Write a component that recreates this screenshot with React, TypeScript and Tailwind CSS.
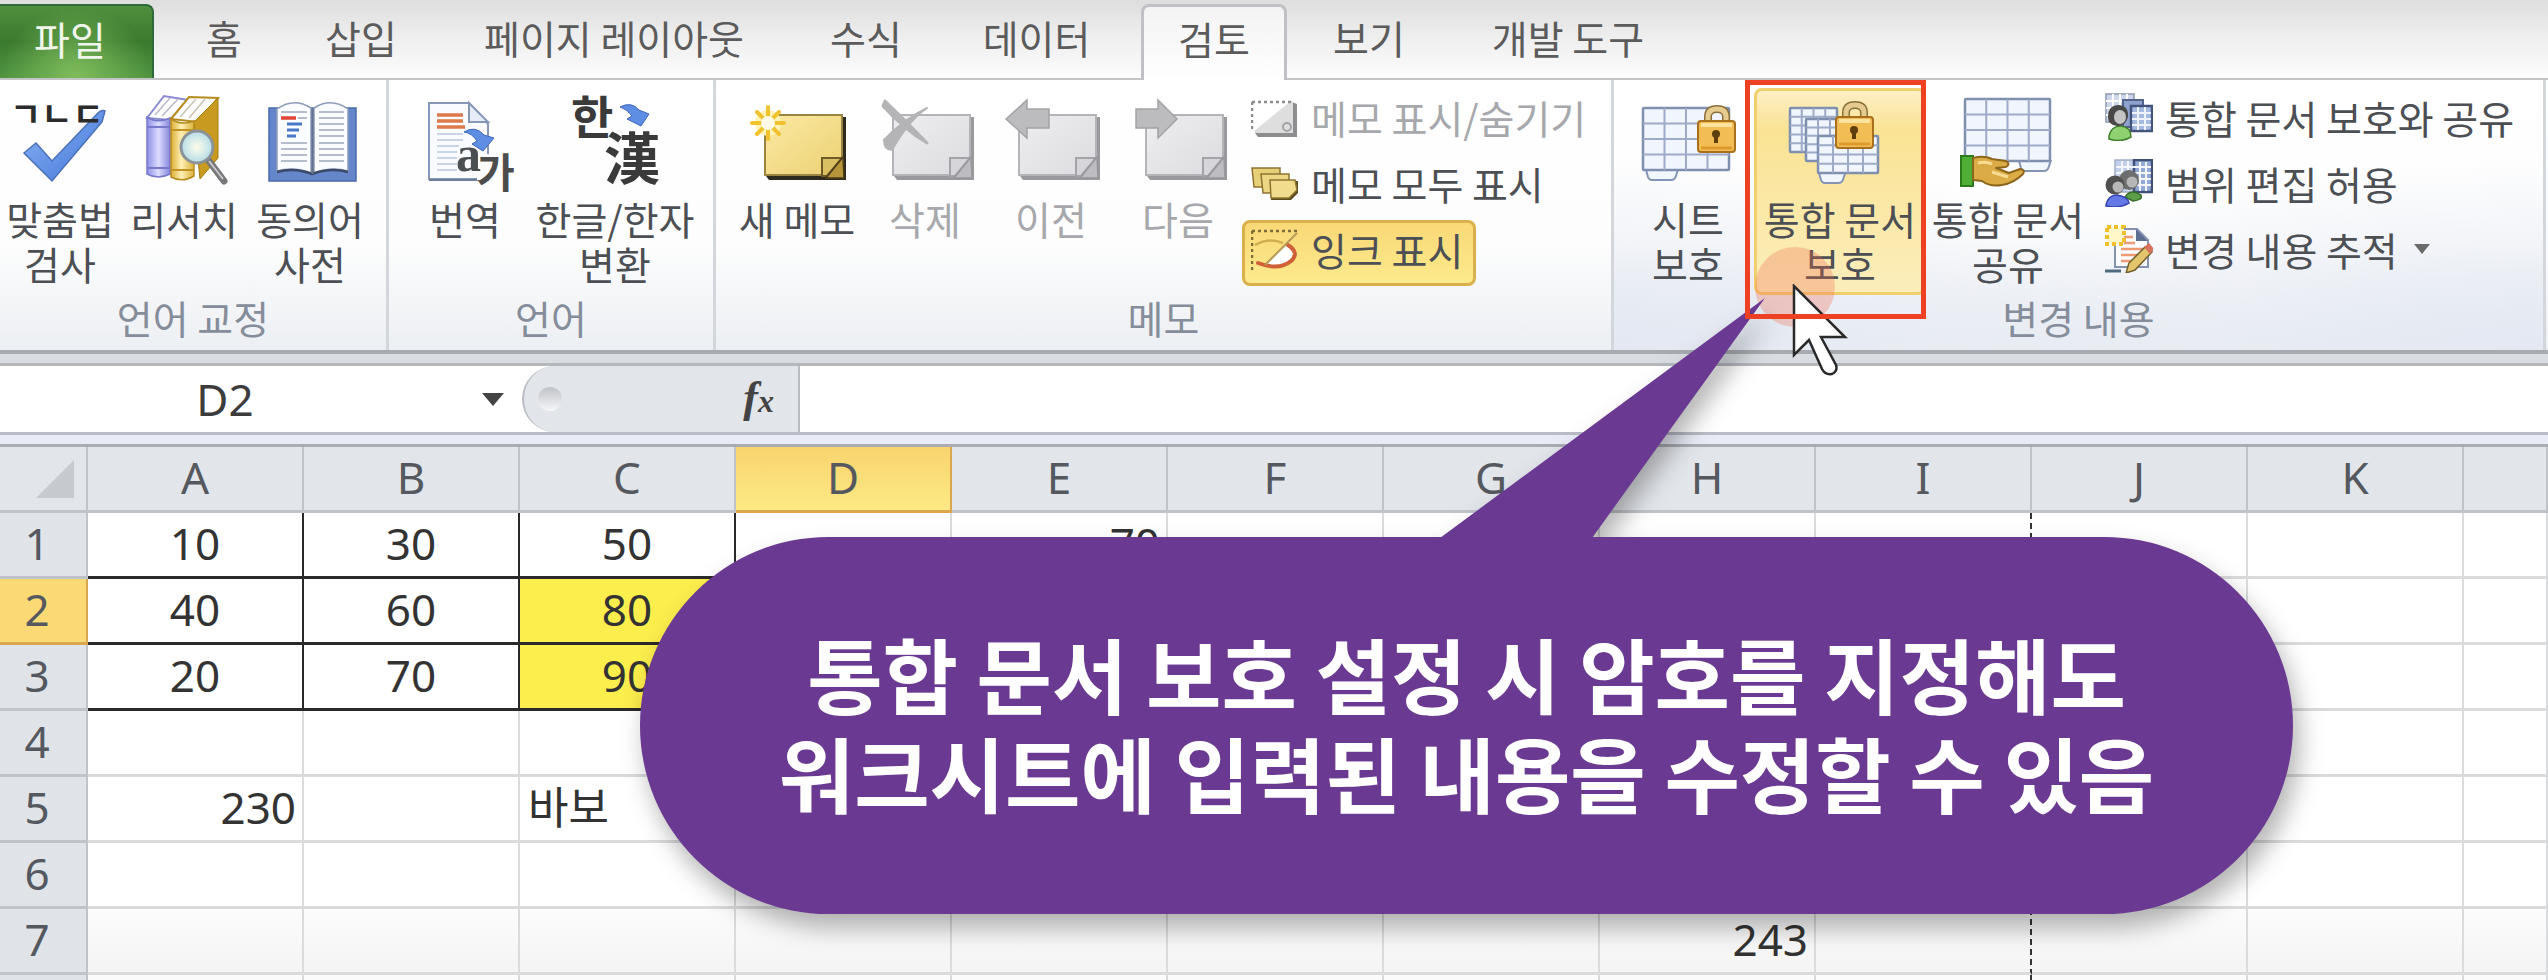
import React from "react";

const ui = "font-['Noto_Sans_CJK_KR','Noto_Sans',sans-serif]";
const latin = "font-['Noto_Sans','Noto_Sans_CJK_KR',sans-serif]";

function Svg({ children }: { children: React.ReactNode }) {
  return (
    <svg viewBox="0 0 104 108" className="h-[108px] w-[104px] shrink-0 overflow-visible" aria-hidden="true">
      {children}
    </svg>
  );
}

function SpellIcon() {
  return (
    <Svg>
      <defs>
        <linearGradient id="tick" x1="0" y1="0" x2="1" y2="1">
          <stop offset="0" stopColor="#8fb6f5" />
          <stop offset="1" stopColor="#3f74d8" />
        </linearGradient>
      </defs>
      <path d="M16 65 L28 55 L44 73 L88 27 Q93 21 97 23 L94 34 L44 93 Z" fill="url(#tick)" stroke="#4a70b8" strokeWidth="1.5" />
      <text x="2" y="39" fontSize="34" fontWeight="700" fill="#2b2b2b" className={ui}>
        ㄱㄴㄷ
      </text>
    </Svg>
  );
}

function ResearchIcon() {
  return (
    <Svg>
      <defs>
        <linearGradient id="violetSpine">
          <stop offset="0" stopColor="#8f8fe6" />
          <stop offset=".5" stopColor="#dcdcff" />
          <stop offset="1" stopColor="#8686dc" />
        </linearGradient>
        <linearGradient id="goldSpine">
          <stop offset="0" stopColor="#d9ae35" />
          <stop offset=".45" stopColor="#fff0b5" />
          <stop offset="1" stopColor="#dcb23c" />
        </linearGradient>
        <radialGradient id="lens">
          <stop offset="0" stopColor="#fffde8" />
          <stop offset="1" stopColor="#b4dcea" />
        </radialGradient>
      </defs>
      <path d="M15 30 L32 8 L56 12 L38 32 Z" fill="#fff" stroke="#8a8ad0" strokeWidth="2" />
      <path d="M23 27 L38 10 M30 28 L46 11" stroke="#b9b9c8" strokeWidth="1.5" />
      <path d="M15 29 Q26 36 38 30 V86 Q26 92 15 86 Z" fill="url(#violetSpine)" stroke="#7777cc" strokeWidth="1.5" />
      <path d="M16 39 H38 M16 80 H38" stroke="#7777cc" strokeWidth="2" />
      <path d="M39 31 L57 9 L86 10 L66 34 Z" fill="#fff" stroke="#b58c1f" strokeWidth="2" />
      <path d="M48 29 L64 11 M57 30 L73 11" stroke="#c9c2ae" strokeWidth="1.5" />
      <path d="M62 34 L86 10 V70 L68 91 Z" fill="#c99a20" stroke="#a47c12" />
      <path d="M39 31 Q50 38 62 33 V88 Q50 95 39 89 Z" fill="url(#goldSpine)" stroke="#b58c1f" strokeWidth="1.5" />
      <path d="M40 42 H61 M40 82 H61" stroke="#c09322" strokeWidth="2" />
      <path d="M77 73 L92 93" stroke="#77777a" strokeWidth="7" strokeLinecap="round" />
      <path d="M77 73 L91 91" stroke="#c8c8cc" strokeWidth="2" />
      <circle cx="65" cy="59" r="16" fill="url(#lens)" stroke="#8b9298" strokeWidth="3" />
    </Svg>
  );
}

function ThesaurusIcon() {
  return (
    <Svg>
      <rect x="11" y="20" width="87" height="73" fill="#6686cc" stroke="#4a68ac" strokeWidth="1.5" />
      <path d="M19 21 Q36 9 53 20 V85 Q36 78 19 83 Z" fill="#fbfcff" stroke="#8e9cb8" strokeWidth="1.5" />
      <path d="M56 20 Q73 9 90 21 V83 Q73 78 56 85 Z" fill="#fbfcff" stroke="#8e9cb8" strokeWidth="1.5" />
      <path d="M19 84 Q36 79 54 86 Q73 79 90 84" fill="none" stroke="#3b4a68" strokeWidth="2.5" />
      <path d="M54.500 21 V86" stroke="#66728c" strokeWidth="2" />
      <path d="M23 30 H38" stroke="#e04636" strokeWidth="3.500" />
      <path d="M29 36 H44 M29 42 H41 M29 48 H38" stroke="#4a78c8" strokeWidth="3" />
      <path
        d="M40 30 H49 M23 24 H49 M23 55 H49 M23 61 H49 M23 67 H49 M23 73 H49 M61 24 H86 M61 30 H86 M61 36 H86 M61 42 H86 M61 48 H86 M61 55 H86 M61 61 H86 M61 67 H86 M61 73 H86"
        stroke="#b4bccd"
        strokeWidth="2"
      />
    </Svg>
  );
}

function TranslateIcon() {
  return (
    <Svg>
      <path d="M16 15 H56 L75 36 V91 H16 Z" fill="#fafbff" stroke="#8797b8" strokeWidth="2" />
      <path d="M56 15 V34 H75 Z" fill="#e6ecf8" stroke="#8797b8" strokeWidth="2" />
      <path d="M16 92 H76" stroke="#6f7d9c" strokeWidth="2" />
      <path d="M24 27 H50 M24 33 H50 M24 39 H52" stroke="#dd7a4c" strokeWidth="3.500" />
      <path d="M24 46 H50 M24 52 H50 M24 58 H46 M24 64 H44 M24 70 H44 M24 76 H44 M24 82 H44" stroke="#ccd4e8" strokeWidth="2" />
      <path d="M64 66 H100 V92 H64 Z" fill="#fdfdfd" />
      <path d="M51 44 Q62 37 71 47 L81 50 L70 63 L59 56 L64 53 Q59 45 51 44 Z" fill="#5e8de4" stroke="#3f66b8" />
      <text x="43" y="83" fontSize="50" fontWeight="700" fill="#4a4f52" className="font-['Liberation_Serif',serif]">
        a
      </text>
      <text x="64" y="100" fontSize="41" fontWeight="700" fill="#4c4c4c" className={ui}>
        가
      </text>
    </Svg>
  );
}

function HanjaIcon() {
  return (
    <Svg>
      <text x="8" y="46" fontSize="46" fontWeight="700" fill="#3a3a3a" className={ui}>
        한
      </text>
      <text x="41" y="91" fontSize="56" fontWeight="700" fill="#3a3a3a" className={ui}>
        漢
      </text>
      <path d="M57 19 Q68 13 76 22 L86 26 L78 38 L64 31 L69 28 Q64 21 57 19 Z" fill="#5e8de4" stroke="#3f66b8" />
    </Svg>
  );
}

function Note({ muted }: { muted?: boolean }) {
  return (
    <>
      <defs>
        <linearGradient id={muted ? "noteGray" : "noteGold"} x1="0" y1="0" x2="1" y2="1">
          <stop offset="0" stopColor={muted ? "#eeeef0" : "#fbe9a4"} />
          <stop offset="1" stopColor={muted ? "#dcdce0" : "#ecd173"} />
        </linearGradient>
      </defs>
      <path d="M21 29 H101 V92 H24 L21 88 Z" fill={muted ? "#9a9a9e" : "#2e2a1e"} />
      <rect x="20" y="27" width="77" height="60" fill={muted ? "url(#noteGray)" : "url(#noteGold)"} stroke={muted ? "#b4b4b8" : "#9a8442"} strokeWidth="2" />
      <path d="M77 70 H97 L82 88 H77 Z" fill={muted ? "#d6d6da" : "#d9be62"} stroke={muted ? "#a4a4a8" : "#6d5a26"} strokeWidth="2" />
      <path d="M98 69 L99 90 H81 Z" fill={muted ? "#bdbdc1" : "#b7953a"} stroke={muted ? "#97979b" : "#4b3c16"} strokeWidth="1.5" />
    </>
  );
}

function NewMemoIcon() {
  return (
    <Svg>
      <Note />
      <circle cx="23" cy="35" r="13" fill="#fff3b8" />
      <path
        d="M23 35 L23 19 M23 35 L34 24 M23 35 L39 35 M23 35 L34 46 M23 35 L23 51 M23 35 L12 46 M23 35 L7 35 M23 35 L12 24"
        stroke="#f0c22e"
        strokeWidth="4"
        strokeLinecap="round"
      />
      <circle cx="23" cy="35" r="7" fill="#fffbe6" />
    </Svg>
  );
}

function DeleteMemoIcon() {
  return (
    <Svg>
      <Note muted />
      <path d="M12 13 Q34 34 54 55 Q32 42 10 18 Z" fill="#b4b4b6" stroke="#b4b4b6" strokeWidth="3" strokeLinejoin="round" />
      <path d="M54 20 Q36 32 19 62 Q11 62 11 52 Q30 32 54 20 Z" fill="#b4b4b6" stroke="#b4b4b6" strokeWidth="2" strokeLinejoin="round" />
    </Svg>
  );
}

function PrevMemoIcon() {
  return (
    <Svg>
      <Note muted />
      <path d="M7 31 L28 12 V21 H50 V40 H28 V50 Z" fill="#bcbcbf" stroke="#a2a2a6" strokeWidth="1.5" />
    </Svg>
  );
}

function NextMemoIcon() {
  return (
    <Svg>
      <Note muted />
      <path d="M51 31 L32 12 V21 H10 V40 H32 V50 Z" fill="#bcbcbf" stroke="#a2a2a6" strokeWidth="1.5" />
    </Svg>
  );
}

function Sheet({ x, y, w, h, cols, rows, tab }: { x: number; y: number; w: number; h: number; cols: number; rows: number; tab?: number }) {
  const lines: string[] = [];
  for (let i = 1; i < cols; i++) lines.push(`M${x + (w * i) / cols} ${y} V${y + h}`);
  for (let i = 1; i < rows; i++) lines.push(`M${x} ${y + (h * i) / rows} H${x + w}`);
  return (
    <>
      {tab !== undefined && (
        <path d={`M${x + tab} ${y + h} l2 7 q1 3 4 3 h${w * 0.22} q4 0 5 -4 l2 -6 Z`} fill="#f2f6fd" stroke="#8494b4" strokeWidth="2" />
      )}
      <rect x={x} y={y} width={w} height={h} rx="1" fill="#f1f5fd" stroke="#7f8fae" strokeWidth="2.5" />
      <path d={lines.join(" ")} stroke="#9daac8" strokeWidth="2" />
    </>
  );
}

function Lock({ x, y }: { x: number; y: number }) {
  return (
    <>
      <path d={`M${x + 10} ${y + 17} V${y + 11} Q${x + 10} ${y + 3} ${x + 19} ${y + 3} Q${x + 28} ${y + 3} ${x + 28} ${y + 11} V${y + 17}`} fill="none" stroke="#8a6f3a" strokeWidth="8" />
      <path d={`M${x + 10} ${y + 17} V${y + 11} Q${x + 10} ${y + 3} ${x + 19} ${y + 3} Q${x + 28} ${y + 3} ${x + 28} ${y + 11} V${y + 17}`} fill="none" stroke="#e6cb8e" strokeWidth="5" />
      <rect x={x} y={y + 15} width="37" height="31" rx="3" fill="#f3bd55" stroke="#a8701c" strokeWidth="2" />
      <path d={`M${x + 3} ${y + 19} H${x + 34}`} stroke="#fde2a0" strokeWidth="4" />
      <path d={`M${x + 3} ${y + 42} H${x + 34}`} stroke="#dd9a2c" strokeWidth="3" />
      <circle cx={x + 18} cy={y + 28} r="4" fill="#5e3f0c" />
      <path d={`M${x + 18} ${y + 28} V${y + 37}`} stroke="#5e3f0c" strokeWidth="4" />
    </>
  );
}

function ProtectSheetIcon() {
  return (
    <Svg>
      <Sheet x={7} y={20} w={86} h={62} cols={4} rows={4} tab={3} />
      <Lock x={62} y={18} />
    </Svg>
  );
}

function ProtectBookIcon() {
  return (
    <Svg>
      <Sheet x={2} y={20} w={47} h={44} cols={4} rows={5} />
      <Sheet x={18} y={31} w={48} h={42} cols={4} rows={5} />
      <Sheet x={30} y={48} w={60} h={37} cols={4} rows={4} tab={1} />
      <Lock x={48} y={14} />
    </Svg>
  );
}

function ShareBookIcon() {
  return (
    <Svg>
      <Sheet x={9} y={11} w={85} h={62} cols={4} rows={4} tab={54} />
      <rect x="5" y="68" width="12" height="30" fill="#4fae36" stroke="#2b7a1c" strokeWidth="2" />
      <path
        d="M17 70 Q28 67 36 71 L50 73 Q55 76 50 79 L40 80 L53 85 L64 81 Q70 82 67 86 Q58 95 46 97 Q34 99 26 93 L17 92 Z"
        fill="#dbab45"
        stroke="#8d661c"
        strokeWidth="2"
        strokeLinejoin="round"
      />
      <path d="M22 75 Q30 73 36 76 M36 84 L52 89" stroke="#f6dc95" strokeWidth="3" fill="none" />
    </Svg>
  );
}

function Small({ children }: { children: React.ReactNode }) {
  return (
    <svg viewBox="0 0 48 48" className="h-12 w-12 shrink-0" aria-hidden="true">
      {children}
    </svg>
  );
}

function ShowHideIcon() {
  return (
    <Small>
      <path d="M4 40 L41 9 L46 11 V44 H7 Z" fill="#8e8e90" />
      <path d="M3 38 L40 8 H42 V40 H5 Z" fill="#dededf" />
      <path d="M1 9 H40 M1 9 V38" stroke="#8c8c8e" strokeWidth="2.500" strokeDasharray="3 3" />
      <circle cx="36" cy="34" r="4" fill="none" stroke="#a4a4a6" strokeWidth="2" />
    </Small>
  );
}

function ShowAllIcon() {
  return (
    <Small>
      <path d="M1 9 H29 V28 H3 Z" fill="#e7cf78" stroke="#8c7430" strokeWidth="1.500" />
      <path d="M10 15 H38 V34 H12 Z" fill="#ecd684" stroke="#8c7430" strokeWidth="1.500" />
      <path d="M22 22 H47 V34 L40 41 H20 Z" fill="#5a4a1e" />
      <path d="M19 21 H44 L46 31 L38 39 H20 Z" fill="#f0dc8c" stroke="#8c7430" strokeWidth="1.500" />
    </Small>
  );
}

function InkIcon() {
  return (
    <Small>
      <path d="M1 6 H48 M1 6 V46" stroke="#7d6c34" strokeWidth="2.500" strokeDasharray="3 3" />
      <path d="M4 20 Q18 12 32 18" fill="none" stroke="#cfae52" strokeWidth="2.500" />
      <path d="M14 40 L38 18 Q48 26 40 36 Q30 44 14 40 Z" fill="#fff" />
      <path d="M37 20 Q49 28 40 36 Q28 46 7 38" fill="none" stroke="#d06038" strokeWidth="4" strokeLinecap="round" />
      <path d="M14 40 L46 8" stroke="#b59a58" strokeWidth="2" />
    </Small>
  );
}

function ShareProtectIcon() {
  return (
    <Small>
      <rect x="1" y="1" width="28" height="28" fill="#cdd6ea" stroke="#8b98b4" strokeWidth="1.500" />
      <path d="M8 1 V29 M15 1 V29 M22 1 V29 M1 8 H29 M1 15 H29 M1 22 H29" stroke="#fff" strokeWidth="2" />
      <path d="M18 7 H38 V34 H18 Z" fill="#8da2cc" stroke="#53648c" strokeWidth="2" />
      <path d="M26 13 H47 V38 H26 Z" fill="#a6bbe2" stroke="#43557e" strokeWidth="2.500" />
      <path d="M33 14 V37 M40 14 V37 M27 20 H46 M27 26 H46 M27 32 H46" stroke="#eef3ff" strokeWidth="2" />
      <path d="M4 43 Q6 33 16 33 Q26 34 26 44 Q16 50 4 46 Z" fill="#8fd070" stroke="#3f7f2c" strokeWidth="1.500" />
      <path d="M3 24 Q3 12 14 12 Q24 13 23 24 Q20 34 12 33 Q3 32 3 24 Z" fill="#484848" />
      <ellipse cx="15" cy="24" rx="6" ry="7" fill="#c4c4c4" />
    </Small>
  );
}

function AllowEditIcon() {
  return (
    <Small>
      <path d="M10 1 H47 V33 H10 Z" fill="#c3d0ec" stroke="#a3afc8" strokeWidth="1.500" />
      <path d="M29 1 H47 V33 H29 Z" fill="#93a9d6" stroke="#3f5076" strokeWidth="2.500" />
      <path d="M17 2 V32 M23 2 V32 M35 3 V32 M41 3 V32 M11 8 H46 M11 14 H46 M11 20 H46 M11 26 H46" stroke="#f4f7ff" strokeWidth="2" />
      <path d="M20 38 Q26 29 36 36 Q38 41 28 42 Z" fill="#5d9e48" stroke="#376b28" strokeWidth="1.500" />
      <path d="M1 46 Q3 36 12 36 Q23 38 24 44 Q14 50 1 47 Z" fill="#6478e6" stroke="#3444b4" strokeWidth="1.500" />
      <circle cx="24" cy="21" r="10" fill="#6e6e6e" />
      <circle cx="27" cy="23" r="5.500" fill="#b6b6b6" />
      <circle cx="10" cy="26" r="9.500" fill="#505050" />
      <circle cx="13" cy="28" r="5.500" fill="#b8b8b8" />
    </Small>
  );
}

function TrackIcon() {
  return (
    <Small>
      <path d="M10 4 H32 L43 15 V42 H10 Z" fill="#fbfcff" stroke="#8793b2" strokeWidth="2" />
      <path d="M31 4 V16 H43 Z" fill="#5f6f92" />
      <path d="M18 12 H28 M18 18 H30 M16 24 H38 M16 30 H34 M16 36 H26" stroke="#ee9a72" strokeWidth="2.500" />
      <path d="M24 38 L40 22 L47 27 L30 45 L21 48 Z" fill="#e3c66c" stroke="#72602c" strokeWidth="1.500" />
      <path d="M39 22 L44 18 L49 24 L45 29 Z" fill="#d8705c" />
      <path d="M0 46 H16" stroke="#4e6a7e" strokeWidth="3" />
      <rect x="2" y="2" width="17" height="17" fill="#fff7c8" stroke="#f0bf2c" strokeWidth="4" strokeDasharray="4 3" />
    </Small>
  );
}

function BigButton({ icon, lines, width, muted, active }: { icon: React.ReactNode; lines: string[]; width: string; muted?: boolean; active?: boolean }) {
  return (
    <button
      type="button"
      disabled={muted}
      className={`flex h-[207px] shrink-0 flex-col items-center whitespace-nowrap text-[39px] leading-[45px] ${width} ${muted ? "text-[#a6a8ac]" : "text-[#4c4f54]"} ${
        active ? "rounded-lg bg-linear-to-b from-[#fdf0c8] via-[#fae394] via-20% to-[#fbeebb] ring-3 ring-[#f2cf6e] ring-inset" : ""
      }`}
    >
      {icon}
      <span className="block">
        {lines.map((l) => (
          <span key={l} className="block">
            {l}
          </span>
        ))}
      </span>
    </button>
  );
}

function SmallButton({ icon, label, muted, active, menu }: { icon: React.ReactNode; label: string; muted?: boolean; active?: boolean; menu?: boolean }) {
  return (
    <button
      type="button"
      disabled={muted}
      aria-pressed={active}
      className={`flex h-[66px] items-center gap-3 self-start rounded-lg border-3 pr-2.5 pb-2 pl-1.5 text-[39px] leading-[45px] whitespace-nowrap ${
        muted ? "text-[#a6a8ac]" : "text-[#4c4f54]"
      } ${active ? "border-[#d9b04c] bg-linear-to-b from-[#f9d877] to-[#fdea8c]" : "border-transparent"}`}
    >
      {icon}
      <span>{label}</span>
      {menu && (
        <svg viewBox="0 0 16 10" className="ml-1 h-2.5 w-4" aria-hidden="true">
          <path d="M0 0 H16 L8 10 Z" fill="#6a6a6a" />
        </svg>
      )}
    </button>
  );
}

function Group({ title, width, children, tinted }: { title: string; width: string; children: React.ReactNode; tinted?: boolean }) {
  return (
    <section
      aria-label={title}
      className={`flex shrink-0 flex-col border-r-3 border-[#d3d6da] ${width} ${
        tinted ? "bg-[radial-gradient(ellipse_at_bottom_left,#e3e8f2,transparent_50%),radial-gradient(ellipse_at_bottom_right,#e3e8f2,transparent_50%)]" : ""
      }`}
    >
      <div className="flex h-[215px] items-start pt-2">{children}</div>
      <h2 className="text-center text-[39px] leading-[45px] text-[#868d9a]">{title}</h2>
    </section>
  );
}

const tabs = [
  { label: "홈", width: "w-[140px]" },
  { label: "삽입", width: "w-[134px]" },
  { label: "페이지 레이아웃", width: "w-[372px]" },
  { label: "수식", width: "w-[132px]" },
  { label: "데이터", width: "w-[209px]" },
  { label: "검토", width: "w-[146px]", active: true },
  { label: "보기", width: "w-[164px]" },
  { label: "개발 도구", width: "w-[234px]" },
];

const columns = ["A", "B", "C", "D", "E", "F", "G", "H", "I", "J", "K", ""];

const cells: Record<string, string> = {
  A1: "10", B1: "30", C1: "50", E1: "70",
  A2: "40", B2: "60", C2: "80",
  A3: "20", B3: "70", C3: "90",
  A5: "230", C5: "바보", H7: "243",
};

function cellClass(col: string, row: number) {
  const boxed = row <= 3 && ["A", "B", "C"].includes(col);
  const align = boxed ? "text-center" : col === "C" ? "text-left pl-2" : "text-right pr-1.5";
  const border = boxed ? "border-[#2a2a2a]" : col === "I" ? "border-[#dadbdc] border-r-[#333] [border-right-style:dashed]" : "border-[#dadbdc]";
  const fill = col === "C" && (row === 2 || row === 3) ? "bg-[#fcee4c]" : row >= 7 ? "bg-linear-to-b from-[#fcfcfc] to-[#f4f4f4]" : "bg-white";
  return `h-[66px] border-r-2 border-b-3 pb-1 ${align} ${border} ${fill}`;
}

function Grid() {
  return (
    <table className={`w-full table-fixed border-separate border-spacing-0 text-[44px] leading-[58px] text-[#333] ${latin}`}>
      <colgroup>
        <col className="w-[88px]" />
        {columns.map((c) => (
          <col key={c} className={c ? "w-[216px]" : ""} />
        ))}
      </colgroup>
      <thead>
        <tr className="text-[#55595f]">
          <th className="h-[66px] border-r-2 border-b-3 border-[#c0c4ca] bg-[#e2e5ea] p-0" aria-label="모두 선택">
            <svg viewBox="0 0 38 38" className="mr-3 ml-auto h-[38px] w-[38px]" aria-hidden="true">
              <path d="M38 0 V38 H0 Z" fill="#c6cace" />
            </svg>
          </th>
          {columns.map((c) => (
            <th
              key={c}
              scope="col"
              className={`h-[66px] border-r-2 border-b-3 pb-1 font-normal ${
                c === "D" ? "border-[#dba650] bg-linear-to-b from-[#f8d46e] to-[#fde984]" : "border-[#c0c4ca] bg-[#e2e5ea]"
              }`}
            >
              {c}
            </th>
          ))}
        </tr>
      </thead>
      <tbody>
        {[1, 2, 3, 4, 5, 6, 7, 8].map((r) => (
          <tr key={r}>
            <th
              scope="row"
              className={`h-[66px] border-r-2 border-b-3 pr-3 pb-1 font-normal text-[#55595f] ${
                r === 2 ? "border-[#dba650] bg-[#fbd975]" : "border-[#c0c4ca] bg-[#e0e4e9]"
              }`}
            >
              {r}
            </th>
            {columns.map((c) => (
              <td key={c} className={cellClass(c, r)}>
                {cells[c + r]}
              </td>
            ))}
          </tr>
        ))}
      </tbody>
    </table>
  );
}

export default function App() {
  return (
    <div className={`relative flex h-screen flex-col overflow-hidden bg-white ${ui}`}>
      <nav className="flex h-20 shrink-0 items-end border-b-2 border-[#c2c4c6] bg-linear-to-b from-[#dedede] via-[#efefef] to-[#fcfcfc] text-[39px] leading-[45px] text-[#5b5b5b]">
        <button
          type="button"
          className="h-[74px] w-[154px] shrink-0 rounded-tr-lg border-t-2 border-r-2 border-[#2f6a3a] bg-[radial-gradient(ellipse_at_bottom,#7fbc5c,transparent_70%),linear-gradient(#4f8f3c,#3b7a2e_50%,#4f9440)] pr-3 pb-2 text-[#f0f6ec]"
        >
          파일
        </button>
        {tabs.map((t) => (
          <button
            key={t.label}
            type="button"
            className={`shrink-0 whitespace-nowrap ${t.width} ${
              t.active ? "-mb-0.5 h-[76px] rounded-t-lg border-x-3 border-t-3 border-[#bfc1c4] bg-linear-to-b from-[#f3f3f3] to-white pb-2.5" : "h-[74px] pb-2"
            }`}
          >
            {t.label}
          </button>
        ))}
      </nav>

      <div className="flex h-[274px] shrink-0 border-b-4 border-[#a7abb0] bg-linear-to-b from-white via-[#fdfdfd] via-60% to-[#eceff3]">
        <Group title="언어 교정" width="w-[389px]">
          <BigButton icon={<SpellIcon />} lines={["맞춤법", "검사"]} width="w-[120px]" />
          <BigButton icon={<ResearchIcon />} lines={["리서치"]} width="w-[128px]" />
          <BigButton icon={<ThesaurusIcon />} lines={["동의어", "사전"]} width="w-[124px]" />
        </Group>
        <Group title="언어" width="w-[327px]">
          <div className="w-3 shrink-0" />
          <BigButton icon={<TranslateIcon />} lines={["번역"]} width="w-[128px]" />
          <BigButton icon={<HanjaIcon />} lines={["한글/한자", "변환"]} width="w-[172px]" />
        </Group>
        <Group title="메모" width="w-[898px]">
          <div className="w-4 shrink-0" />
          <BigButton icon={<NewMemoIcon />} lines={["새 메모"]} width="w-[130px]" />
          <BigButton icon={<DeleteMemoIcon />} lines={["삭제"]} width="w-[126px]" muted />
          <BigButton icon={<PrevMemoIcon />} lines={["이전"]} width="w-[126px]" muted />
          <BigButton icon={<NextMemoIcon />} lines={["다음"]} width="w-[128px]" muted />
          <div className="flex flex-col">
            <SmallButton icon={<ShowHideIcon />} label="메모 표시/숨기기" muted />
            <SmallButton icon={<ShowAllIcon />} label="메모 모두 표시" />
            <SmallButton icon={<InkIcon />} label="잉크 표시" active />
          </div>
        </Group>
        <Group title="변경 내용" width="w-[932px]" tinted>
          <div className="w-3 shrink-0" />
          <BigButton icon={<ProtectSheetIcon />} lines={["시트", "보호"]} width="w-[124px]" />
          <div className="w-1 shrink-0" />
          <BigButton icon={<ProtectBookIcon />} lines={["통합 문서", "보호"]} width="w-[172px]" active />
          <BigButton icon={<ShareBookIcon />} lines={["통합 문서", "공유"]} width="w-[164px]" />
          <div className="ml-1.5 flex flex-col">
            <SmallButton icon={<ShareProtectIcon />} label="통합 문서 보호와 공유" />
            <SmallButton icon={<AllowEditIcon />} label="범위 편집 허용" />
            <SmallButton icon={<TrackIcon />} label="변경 내용 추적" menu />
          </div>
        </Group>
      </div>

      <div className="h-3 shrink-0 border-b-3 border-[#b4b8bd] bg-[#d9dde1]" />

      <div className="flex h-[66px] shrink-0 bg-white">
        <div className={`flex w-[522px] shrink-0 items-center text-[44px] text-[#3c3c3c] ${latin}`}>
          <input aria-label="이름 상자" defaultValue="D2" className="h-full w-[450px] bg-transparent text-center outline-none" />
          <svg viewBox="0 0 22 13" className="ml-8 h-[13px] w-[22px]" aria-hidden="true">
            <path d="M0 0 H22 L11 13 Z" fill="#444" />
          </svg>
        </div>
        <div className="flex w-[278px] shrink-0 items-center justify-between rounded-l-full border-x-2 border-[#b9bdc3] bg-[#e2e5ea] pr-6 pl-3.5">
          <span className="h-6 w-6 rounded-full bg-linear-to-b from-[#bfc2c7] to-[#f6f7f9]" />
          <button type="button" aria-label="함수 삽입" className="font-['Liberation_Serif',serif] text-[44px] leading-[44px] font-bold text-[#444] italic">
            f<span className="text-[32px]">x</span>
          </button>
        </div>
        <input aria-label="수식 입력줄" className="min-w-0 flex-1 bg-white px-3 text-[44px] outline-none" />
      </div>

      <div className="h-[15px] shrink-0 border-y-3 border-t-[#b9bcc4] border-b-[#a9acb3] bg-[#e9ebf6]" />

      <Grid />

      <div className="absolute top-[247px] left-[1755px] h-20 w-20 rounded-full bg-[#ee6a50]/30" />

      <div className="absolute top-[298px] left-[640px] h-[616px] w-[1653px] drop-shadow-[6px_14px_12px_rgba(0,0,0,0.3)]">
        <svg viewBox="0 0 1125 300" className="absolute top-0 left-0 h-[300px] w-[1125px]" aria-hidden="true">
          <path d="M1125 0 L800 240 V300 H915 L952 240 Z" fill="#6a3991" />
        </svg>
        <div className="absolute inset-x-0 bottom-0 flex h-[377px] items-center justify-center rounded-full bg-[#6a3991] pb-2">
          <p className="text-center text-[82px] leading-[99px] font-bold whitespace-nowrap text-white">
            통합 문서 보호 설정 시 암호를 지정해도
            <br />
            워크시트에 입력된 내용을 수정할 수 있음
          </p>
        </div>
      </div>

      <svg viewBox="0 0 56 94" className="absolute top-[284px] left-[1792px] h-[94px] w-14" aria-hidden="true">
        <path d="M2 2 V71 L17 56 L30 85 Q33 91 40 90 Q46 87 44 81 L29 53 H53 Z" fill="#fff" stroke="#2a2a2a" strokeWidth="2.5" />
      </svg>
      <div className="absolute top-[80px] left-[1745px] h-[239px] w-[181px] border-5 border-[#ee4023]" />
    </div>
  );
}
